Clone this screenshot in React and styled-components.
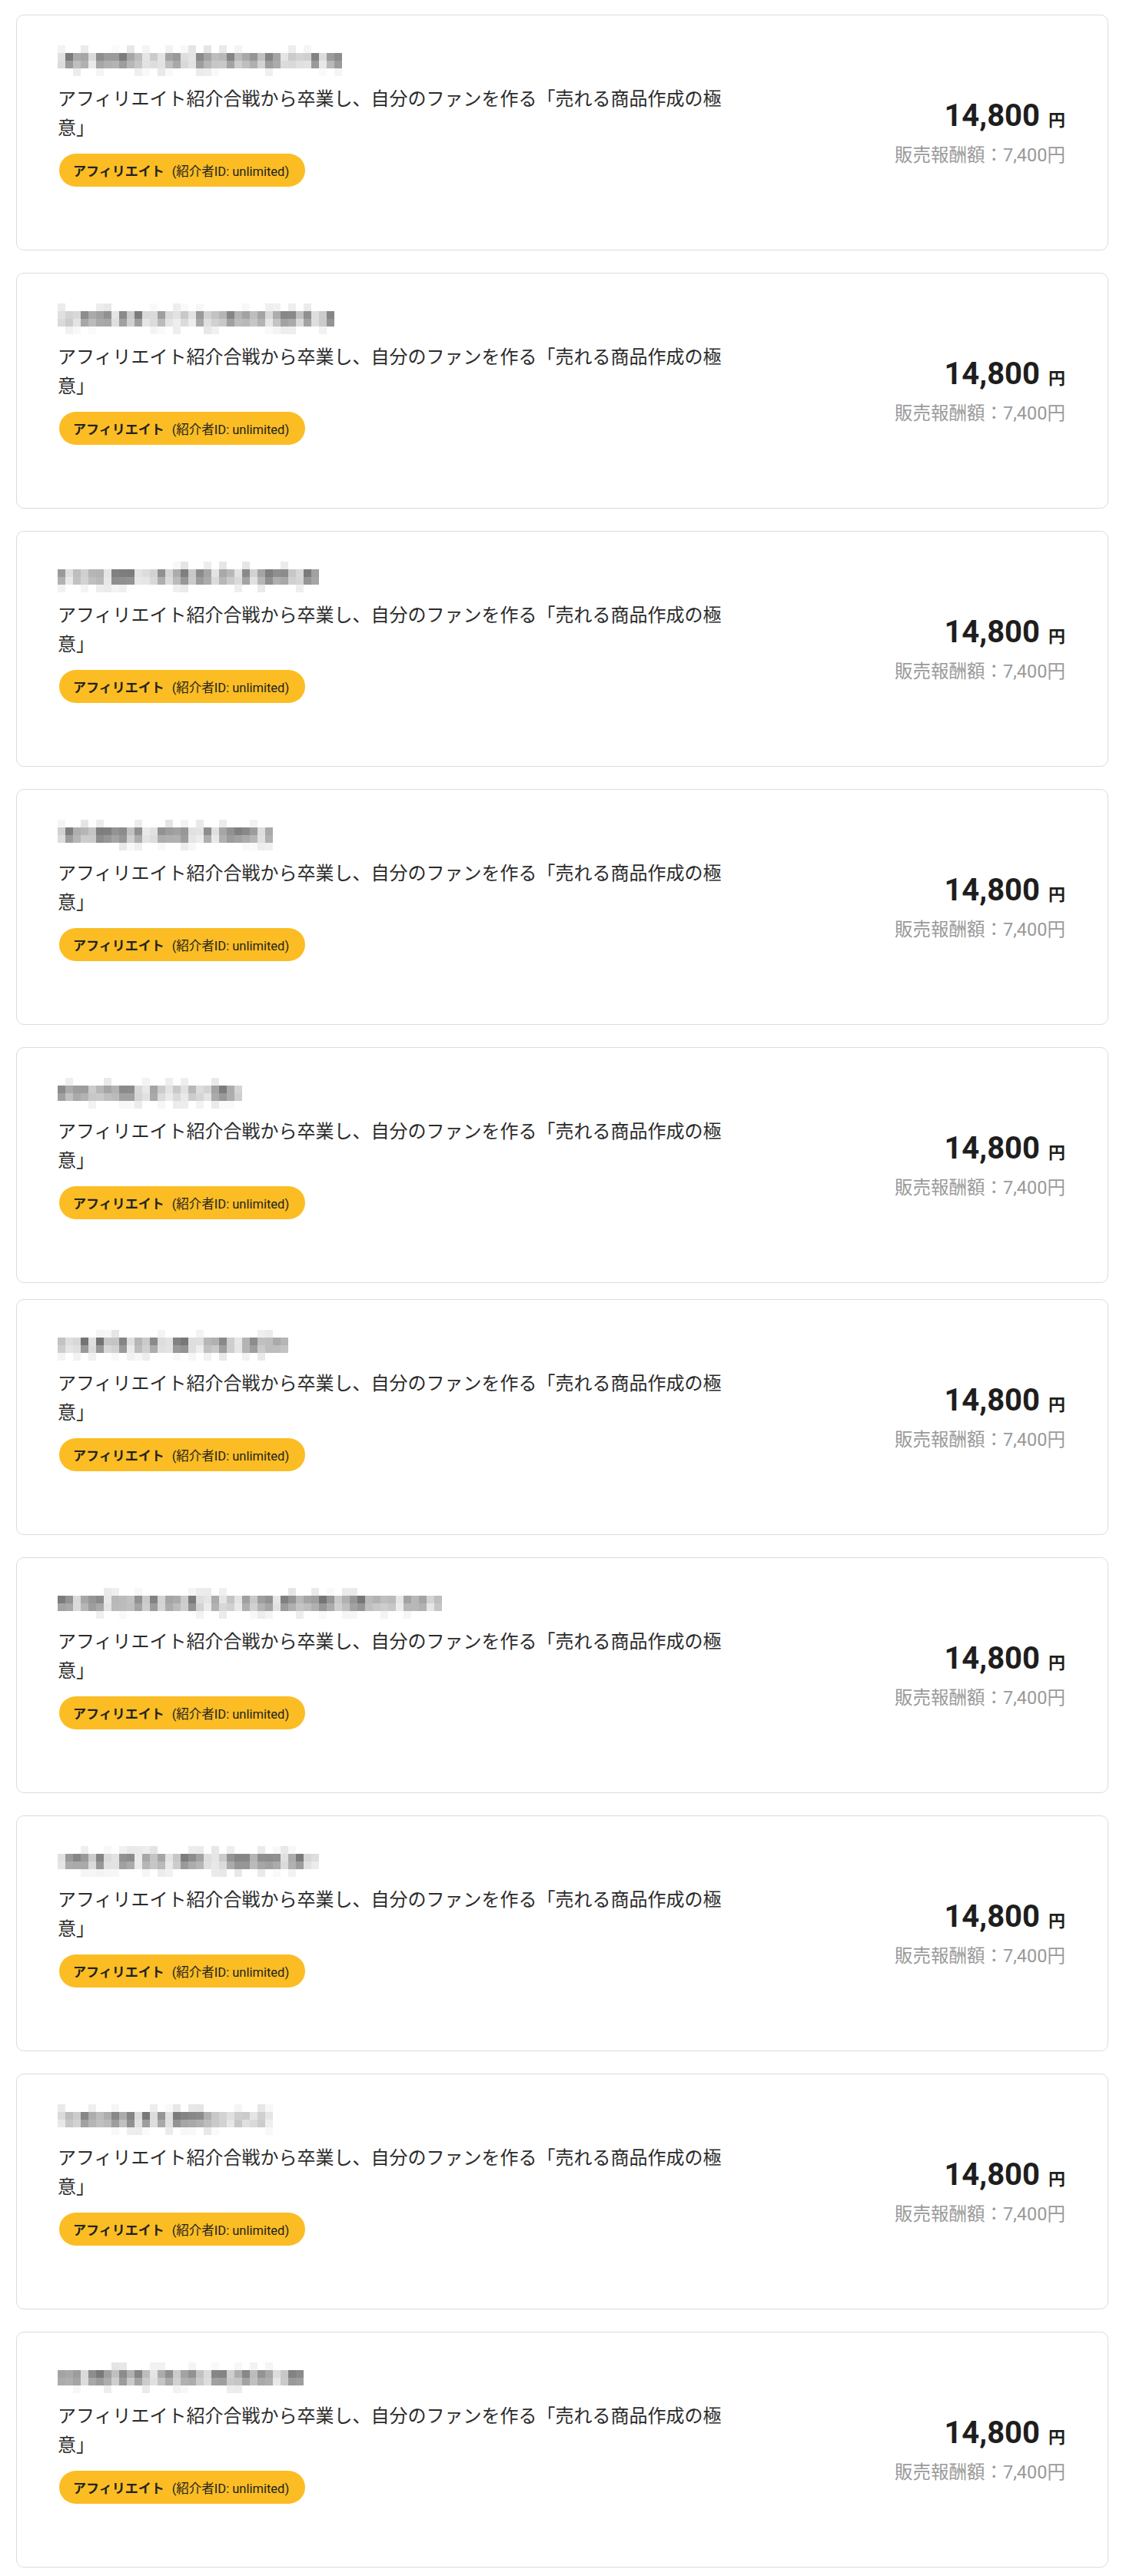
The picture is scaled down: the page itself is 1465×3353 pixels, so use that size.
import React from 'react'
import styled, { createGlobalStyle } from 'styled-components'

const GlobalStyle = createGlobalStyle`
  body {
    margin: 0;
    background: #fff;
    font-family: Roboto, "Noto Sans CJK JP", "Noto Sans", sans-serif;
    color: #2b2b2b;
  }
`

const Page = styled.div`
  display: flex;
  flex-direction: column;
  padding: 19px 23px 14px 21px;
`

const Card = styled.div`
  display: flex;
  justify-content: space-between;
  align-items: center;
  margin-top: ${p => p.$gap}px;
  padding: 39px 55px 40px 53px;
  border: 1px solid #dcdcdc;
  border-radius: 10px;
  background: #fff;
  &:first-child {
    margin-top: 0;
  }
`

const Info = styled.div`
  display: flex;
  flex-direction: column;
  flex: 0 1 878px;
`

const Mosaic = styled.svg`
  display: block;
  height: 40px;
`

const Title = styled.p`
  margin: 9px 0 0;
  font-family: "Noto Sans CJK JP", sans-serif;
  font-size: 24px;
  line-height: 38px;
  color: #2b2b2b;
`

const Badge = styled.span`
  display: inline-flex;
  align-items: center;
  align-self: flex-start;
  gap: 10px;
  height: 43px;
  margin: 16px 0 42px 2px;
  padding: 0 21px 0 18px;
  border-radius: 22px;
  background: #fbbd23;
  color: #222;
  font-size: 16.5px;
`

const BadgeLabel = styled.b`
  font-size: 17px;
  font-weight: 700;
`

const Amount = styled.div`
  text-align: right;
  white-space: nowrap;
`

const Price = styled.div`
  font-size: 40px;
  font-weight: 700;
  line-height: 48px;
  color: #1e1e1e;
`

const Yen = styled.span`
  margin-left: 11px;
  font-size: 22px;
  font-weight: 700;
`

const Reward = styled.div`
  margin-top: 5px;
  font-size: 23.5px;
  line-height: 32px;
  color: #9a9a9a;
`

// redacted names are pixel mosaics of 10px cells
const mosaicCells = (seed, cols) => {
  let s = seed * 9301 + 49297
  const rnd = () => {
    s = (s * 9301 + 49297) % 233280
    return s / 233280
  }
  const cells = []
  for (let c = 0; c < cols; c++) {
    const gap = rnd() < 0.12
    const ink = gap ? 0.05 : rnd()
    const g1 = Math.round(238 - ink * 110 - rnd() * 15)
    const g2 = Math.round(242 - ink * 85 - rnd() * 20)
    cells.push({ c, r: 1, g: g1 })
    cells.push({ c, r: 2, g: g2 })
    if (rnd() < 0.3) cells.push({ c, r: 0, g: Math.round(228 + rnd() * 22) })
    if (rnd() < 0.35) cells.push({ c, r: 3, g: Math.round(232 + rnd() * 18) })
  }
  return cells
}

const Name = ({ seed, width }) => {
  const cols = Math.round(width / 10)
  return (
    <Mosaic width={cols * 10} viewBox={`0 0 ${cols * 10} 40`} shapeRendering="crispEdges">
      {mosaicCells(seed, cols).map(({ c, r, g }) => (
        <rect key={`${c}-${r}`} x={c * 10} y={r * 10} width="10" height="10" fill={`rgb(${g},${g},${g})`} />
      ))}
    </Mosaic>
  )
}

const sales = [
  { id: 1, nameWidth: 370, gap: 29 },
  { id: 2, nameWidth: 360, gap: 29 },
  { id: 3, nameWidth: 335, gap: 29 },
  { id: 4, nameWidth: 280, gap: 29 },
  { id: 5, nameWidth: 240, gap: 29 },
  { id: 6, nameWidth: 300, gap: 21 },
  { id: 7, nameWidth: 500, gap: 29 },
  { id: 8, nameWidth: 335, gap: 29 },
  { id: 9, nameWidth: 280, gap: 29 },
  { id: 10, nameWidth: 320, gap: 29 },
]

const SaleCard = ({ id, nameWidth, gap }) => (
  <Card $gap={gap}>
    <Info>
      <Name seed={id * 7 + 3} width={nameWidth} />
      <Title>アフィリエイト紹介合戦から卒業し、自分のファンを作る「売れる商品作成の極意」</Title>
      <Badge>
        <BadgeLabel>アフィリエイト</BadgeLabel>
        <span>(紹介者ID: unlimited)</span>
      </Badge>
    </Info>
    <Amount>
      <Price>
        14,800<Yen>円</Yen>
      </Price>
      <Reward>販売報酬額：7,400円</Reward>
    </Amount>
  </Card>
)

export default function App() {
  return (
    <>
      <GlobalStyle />
      <Page>
        {sales.map(s => (
          <SaleCard key={s.id} {...s} />
        ))}
      </Page>
    </>
  )
}
